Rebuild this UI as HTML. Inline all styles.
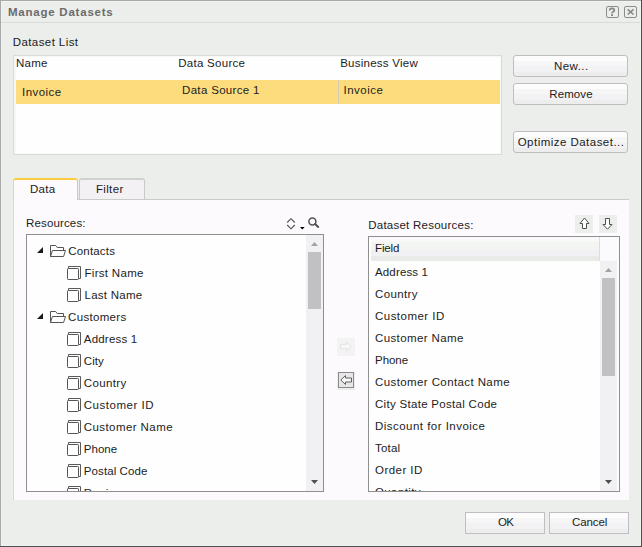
<!DOCTYPE html>
<html><head><meta charset="utf-8">
<style>
html,body{margin:0;padding:0;}
body{width:642px;height:547px;overflow:hidden;background:#eceeeb;font-family:"Liberation Sans",sans-serif;font-size:11.5px;color:#1c1c1c;position:relative;}
.a{position:absolute;}
.t{position:absolute;white-space:nowrap;line-height:14px;}
.btn{position:absolute;box-sizing:border-box;border:1px solid #c0bec2;background:linear-gradient(#fcfcfc 0,#fcfcfc 25%,#f5f6f5 25%,#f5f6f5 50%,#f2f1f3 50%,#f2f1f3 80%,#ededee 80%,#ededee 100%);}
svg{position:absolute;overflow:visible;}
</style></head><body>

<div class="a" style="left:0;top:0;width:642px;height:1px;background:#a8a8a8"></div>
<div class="a" style="left:1px;top:1px;width:640px;height:1px;background:#f2f4f2"></div>
<div class="a" style="left:0;top:0;width:1px;height:547px;background:#a8a8a8"></div>
<div class="a" style="left:1px;top:1px;width:1px;height:545px;background:#f2f4f2"></div>
<div class="a" style="left:640px;top:1px;width:1px;height:545px;background:#f2f4f2"></div>
<div class="a" style="left:1px;top:545px;width:640px;height:1px;background:#f2f4f2"></div>
<div class="a" style="left:641px;top:0;width:1px;height:547px;background:#4e4e4e"></div>
<div class="a" style="left:0;top:546px;width:642px;height:1px;background:#4e4e4e"></div>
<div class="a" style="left:1px;top:22px;width:639px;height:1px;background:#d9dad9"></div>
<div class="a" style="left:606px;top:6px;width:13px;height:12px;box-sizing:border-box;border:1px solid #8d8d8d;border-radius:2px;"></div>
<div class="a" style="left:624px;top:6px;width:13px;height:12px;box-sizing:border-box;border:1px solid #8d8d8d;border-radius:2px;"></div>
<svg style="left:606px;top:6px" width="13" height="12" viewBox="0 0 13 12"><path d="M3.7,4.4 C3.7,1.8 8.3,1.8 8.3,4.2 C8.3,5.7 6,5.6 6,7.3" fill="none" stroke="#878787" stroke-width="1.8"/><rect x="5" y="8.2" width="2" height="1.8" fill="#878787"/></svg>
<svg style="left:624px;top:6px" width="13" height="12" viewBox="0 0 13 12"><path d="M3.7,3.3 L9.5,8.5 M9.5,3.3 L3.7,8.5" fill="none" stroke="#878787" stroke-width="1.6"/></svg>
<div class="a" style="left:13px;top:55px;width:489px;height:100px;box-sizing:border-box;border:1px solid #d9dbd9;background:#fefefe;box-shadow:inset 2px 1px 0 #f6f7f6,inset -1px -1px 0 #f8f9f8"></div>
<div class="a" style="left:16px;top:80px;width:484px;height:24px;background:#fcdc7c"></div>
<div class="a" style="left:338px;top:80px;width:1px;height:24px;background:#d3cdb8"></div>
<div class="btn" style="left:513px;top:55px;width:115px;height:22px;border-radius:3px"></div>
<div class="btn" style="left:513px;top:83px;width:115px;height:22px;border-radius:3px"></div>
<div class="btn" style="left:513px;top:131px;width:115px;height:22px;border-radius:3px"></div>
<div class="btn" style="left:465px;top:512px;width:80px;height:22px;border-radius:0px"></div>
<div class="btn" style="left:549px;top:512px;width:80px;height:22px;border-radius:0px"></div>
<div class="a" style="left:13px;top:199px;width:616px;height:301px;box-sizing:border-box;background:#fcfafd;border-left:1px solid #d8d8d8;border-top:1px solid #c9cbc9;"></div>
<div class="a" style="left:13px;top:178px;width:65px;height:22px;box-sizing:border-box;border:1px solid #c8cac8;border-left-color:#d2d3d2;border-top:2px solid #facc3e;border-bottom:none;border-radius:3px 3px 0 0;background:#fcfafd;"></div>
<div class="a" style="left:79px;top:178px;width:66px;height:21px;box-sizing:border-box;border:1px solid #c8cac8;border-top:2px solid #d0d1d0;border-bottom:none;border-radius:3px 3px 0 0;background:#f3f1f4;"></div>
<div class="a" style="left:26px;top:234px;width:298px;height:258px;box-sizing:border-box;border:1px solid #8f8f8f;background:#fefefe;"></div>
<div class="a" style="left:306px;top:235px;width:17px;height:256px;background:#f1f0f2;"></div>
<div class="a" style="left:308px;top:252px;width:13px;height:57px;background:#c1c0c2;"></div>
<svg style="left:311px;top:242px" width="7" height="4" viewBox="0 0 7 4"><path d="M0,4 L3.5,0 L7,4 Z" fill="#a3a3a3"/></svg>
<svg style="left:311px;top:480px" width="7" height="4" viewBox="0 0 7 4"><path d="M0,0 L3.5,4 L7,0 Z" fill="#505050"/></svg>
<div class="a" style="left:368px;top:236px;width:252px;height:256px;box-sizing:border-box;border:1px solid #8f8f8f;background:#fefefe;"></div>
<div class="a" style="left:599px;top:237px;width:1px;height:24px;background:#dddddd"></div>
<div class="a" style="left:371px;top:237px;width:228px;height:24px;background:linear-gradient(#f9f9f9 0,#f9f9f9 20.8%,#f3f5f3 20.8%,#f3f5f3 54.2%,#f1f0f2 54.2%,#f1f0f2 79.2%,#e9ebe9 79.2%,#e9ebe9 100%);"></div>
<div class="a" style="left:600px;top:237px;width:19px;height:24px;background:#fbfafc;"></div>
<div class="a" style="left:600px;top:261px;width:17px;height:230px;background:#f1f0f2;"></div>
<div class="a" style="left:602px;top:278px;width:13px;height:98px;background:#c1c0c2;"></div>
<svg style="left:605px;top:268px" width="7" height="4" viewBox="0 0 7 4"><path d="M0,4 L3.5,0 L7,4 Z" fill="#a3a3a3"/></svg>
<svg style="left:605px;top:480px" width="7" height="4" viewBox="0 0 7 4"><path d="M0,0 L3.5,4 L7,0 Z" fill="#505050"/></svg>
<svg style="left:286px;top:217px" width="10" height="13" viewBox="0 0 10 13"><path d="M1.2,5.5 L5,1.7 L8.8,5.5 M1.2,8 L5,11.8 L8.8,8" fill="none" stroke="#505050" stroke-width="1.1"/></svg>
<svg style="left:299.8px;top:226.8px" width="4.6" height="2.4" viewBox="0 0 4.6 2.4"><path d="M0,0 L4.6,0 L2.3,2.4 Z" fill="#000"/></svg>
<svg style="left:307px;top:216px" width="13" height="13" viewBox="0 0 13 13"><circle cx="5.4" cy="5.4" r="3.5" fill="none" stroke="#525252" stroke-width="1.5"/><path d="M8.1,8 L11.2,10.9" stroke="#525252" stroke-width="2.1" stroke-linecap="round"/></svg>
<div class="a" style="left:575px;top:215px;width:18px;height:18px;background:#eceeeb"></div>
<div class="a" style="left:599px;top:215px;width:18px;height:18px;background:#eceeeb"></div>
<svg style="left:575px;top:215px" width="18" height="18" viewBox="0 0 18 18"><path d="M9.5,3 L14,8.5 L11.5,8.5 L11.5,13.5 L7.5,13.5 L7.5,8.5 L5,8.5 Z" fill="#fff" stroke="#505050" stroke-width="1"/></svg>
<svg style="left:599px;top:215px" width="18" height="18" viewBox="0 0 18 18"><path d="M8.5,14.2 L13,9.5 L10.5,9.5 L10.5,3.5 L6.5,3.5 L6.5,9.5 L4,9.5 Z" fill="#fff" stroke="#505050" stroke-width="1"/></svg>
<div class="a" style="left:337px;top:338px;width:18px;height:18px;background:#f2f3f2"></div>
<svg style="left:337px;top:338px" width="18" height="18" viewBox="0 0 18 18"><path d="M14.2,8.5 L9.5,4 L9.5,6.3 L3.5,6.3 L3.5,10.7 L9.5,10.7 L9.5,13 Z" fill="#f7f7f7" stroke="#e2e2e2" stroke-width="1"/></svg>
<div class="a" style="left:337px;top:372px;width:18px;height:18px;background:#eceeeb"></div>
<div class="a" style="left:338px;top:372px;width:16px;height:16px;box-sizing:border-box;border:1px solid #8a8a8a;background:#e6e7e6"></div>
<svg style="left:337px;top:372px" width="18" height="18" viewBox="0 0 18 18"><path d="M3.8,8 L8.5,3.5 L8.5,6 L14.5,6 L14.5,10 L8.5,10 L8.5,12.5 Z" fill="#f6f6f6" stroke="#606060" stroke-width="1"/></svg>
<svg style="left:37px;top:247px" width="6" height="6" viewBox="0 0 6 6"><path d="M6,0 L6,6 L0,6 Z" fill="#1a1a1a"/></svg>
<svg style="left:50px;top:245px" width="17" height="13" viewBox="0 0 17 13"><path d="M0.5,11.5 L0.5,0.5 L5.7,0.5 L7.2,2.5 L13.5,2.5 L13.5,5.5 M2.4,5.5 L15.5,5.5 L13.6,11.5 L0.5,11.5 L2.4,5.5" fill="none" stroke="#555" stroke-width="1"/></svg>
<svg style="left:37px;top:313px" width="6" height="6" viewBox="0 0 6 6"><path d="M6,0 L6,6 L0,6 Z" fill="#1a1a1a"/></svg>
<svg style="left:50px;top:311px" width="17" height="13" viewBox="0 0 17 13"><path d="M0.5,11.5 L0.5,0.5 L5.7,0.5 L7.2,2.5 L13.5,2.5 L13.5,5.5 M2.4,5.5 L15.5,5.5 L13.6,11.5 L0.5,11.5 L2.4,5.5" fill="none" stroke="#555" stroke-width="1"/></svg>
<svg style="left:67px;top:266px;" width="14" height="14" viewBox="0 0 14 14"><path d="M1.5,2.5 L1.5,0.5 L13.5,0.5 L13.5,12.5 L11.5,12.5" fill="none" stroke="#5a5a5a" stroke-width="1"/><rect x="0.5" y="2.5" width="11" height="11" rx="0.7" fill="#fff" stroke="#555" stroke-width="1"/></svg>
<svg style="left:67px;top:288px;" width="14" height="14" viewBox="0 0 14 14"><path d="M1.5,2.5 L1.5,0.5 L13.5,0.5 L13.5,12.5 L11.5,12.5" fill="none" stroke="#5a5a5a" stroke-width="1"/><rect x="0.5" y="2.5" width="11" height="11" rx="0.7" fill="#fff" stroke="#555" stroke-width="1"/></svg>
<svg style="left:67px;top:332px;" width="14" height="14" viewBox="0 0 14 14"><path d="M1.5,2.5 L1.5,0.5 L13.5,0.5 L13.5,12.5 L11.5,12.5" fill="none" stroke="#5a5a5a" stroke-width="1"/><rect x="0.5" y="2.5" width="11" height="11" rx="0.7" fill="#fff" stroke="#555" stroke-width="1"/></svg>
<svg style="left:67px;top:354px;" width="14" height="14" viewBox="0 0 14 14"><path d="M1.5,2.5 L1.5,0.5 L13.5,0.5 L13.5,12.5 L11.5,12.5" fill="none" stroke="#5a5a5a" stroke-width="1"/><rect x="0.5" y="2.5" width="11" height="11" rx="0.7" fill="#fff" stroke="#555" stroke-width="1"/></svg>
<svg style="left:67px;top:376px;" width="14" height="14" viewBox="0 0 14 14"><path d="M1.5,2.5 L1.5,0.5 L13.5,0.5 L13.5,12.5 L11.5,12.5" fill="none" stroke="#5a5a5a" stroke-width="1"/><rect x="0.5" y="2.5" width="11" height="11" rx="0.7" fill="#fff" stroke="#555" stroke-width="1"/></svg>
<svg style="left:67px;top:398px;" width="14" height="14" viewBox="0 0 14 14"><path d="M1.5,2.5 L1.5,0.5 L13.5,0.5 L13.5,12.5 L11.5,12.5" fill="none" stroke="#5a5a5a" stroke-width="1"/><rect x="0.5" y="2.5" width="11" height="11" rx="0.7" fill="#fff" stroke="#555" stroke-width="1"/></svg>
<svg style="left:67px;top:420px;" width="14" height="14" viewBox="0 0 14 14"><path d="M1.5,2.5 L1.5,0.5 L13.5,0.5 L13.5,12.5 L11.5,12.5" fill="none" stroke="#5a5a5a" stroke-width="1"/><rect x="0.5" y="2.5" width="11" height="11" rx="0.7" fill="#fff" stroke="#555" stroke-width="1"/></svg>
<svg style="left:67px;top:442px;" width="14" height="14" viewBox="0 0 14 14"><path d="M1.5,2.5 L1.5,0.5 L13.5,0.5 L13.5,12.5 L11.5,12.5" fill="none" stroke="#5a5a5a" stroke-width="1"/><rect x="0.5" y="2.5" width="11" height="11" rx="0.7" fill="#fff" stroke="#555" stroke-width="1"/></svg>
<svg style="left:67px;top:464px;" width="14" height="14" viewBox="0 0 14 14"><path d="M1.5,2.5 L1.5,0.5 L13.5,0.5 L13.5,12.5 L11.5,12.5" fill="none" stroke="#5a5a5a" stroke-width="1"/><rect x="0.5" y="2.5" width="11" height="11" rx="0.7" fill="#fff" stroke="#555" stroke-width="1"/></svg>
<svg style="left:67px;top:486px;overflow:hidden;" width="14" height="5" viewBox="0 0 14 5"><path d="M1.5,2.5 L1.5,0.5 L13.5,0.5 L13.5,12.5 L11.5,12.5" fill="none" stroke="#5a5a5a" stroke-width="1"/><rect x="0.5" y="2.5" width="11" height="11" rx="0.7" fill="#fff" stroke="#555" stroke-width="1"/></svg>
<div class="t" style="left:7.9px;top:5px;letter-spacing:0.78px;font-weight:bold;color:#6b6b6b;">Manage Datasets</div>
<div class="t" style="left:12.7px;top:35px;letter-spacing:0.42px;">Dataset List</div>
<div class="t" style="left:16.0px;top:56px;letter-spacing:0.27px;">Name</div>
<div class="t" style="left:178.2px;top:56px;letter-spacing:0.29px;">Data Source</div>
<div class="t" style="left:340.2px;top:56px;letter-spacing:0.25px;">Business View</div>
<div class="t" style="left:22.0px;top:85px;letter-spacing:0.46px;">Invoice</div>
<div class="t" style="left:182.0px;top:83px;letter-spacing:0.33px;">Data Source 1</div>
<div class="t" style="left:343.5px;top:83px;letter-spacing:0.48px;">Invoice</div>
<div class="t" style="left:554.0px;top:59px;letter-spacing:0.43px;">New...</div>
<div class="t" style="left:549.3px;top:87px;letter-spacing:0.09px;">Remove</div>
<div class="t" style="left:517.7px;top:135px;letter-spacing:0.47px;">Optimize Dataset...</div>
<div class="t" style="left:29.9px;top:182px;letter-spacing:0.30px;">Data</div>
<div class="t" style="left:96.0px;top:182px;letter-spacing:0.33px;">Filter</div>
<div class="t" style="left:26.0px;top:216px;letter-spacing:0.15px;">Resources:</div>
<div class="t" style="left:368.2px;top:218px;letter-spacing:0.25px;">Dataset Resources:</div>
<div class="t" style="left:497.9px;top:515px;letter-spacing:-0.60px;">OK</div>
<div class="t" style="left:571.9px;top:515px;letter-spacing:-0.06px;">Cancel</div>
<div class="t" style="left:68.2px;top:244px;letter-spacing:0.20px;">Contacts</div>
<div class="t" style="left:84.5px;top:266px;letter-spacing:0.30px;">First Name</div>
<div class="t" style="left:84.5px;top:288px;letter-spacing:0.25px;">Last Name</div>
<div class="t" style="left:68.1px;top:310px;letter-spacing:0.31px;">Customers</div>
<div class="t" style="left:83.8px;top:332px;letter-spacing:0.20px;">Address 1</div>
<div class="t" style="left:83.8px;top:354px;letter-spacing:0.06px;">City</div>
<div class="t" style="left:83.8px;top:376px;letter-spacing:0.35px;">Country</div>
<div class="t" style="left:83.8px;top:398px;letter-spacing:0.51px;">Customer ID</div>
<div class="t" style="left:83.8px;top:420px;letter-spacing:0.42px;">Customer Name</div>
<div class="t" style="left:83.8px;top:442px;letter-spacing:0.03px;">Phone</div>
<div class="t" style="left:83.8px;top:464px;letter-spacing:0.09px;">Postal Code</div>
<div class="t" style="left:83.8px;top:486px;letter-spacing:0.25px;height:5px;overflow:hidden;">Region</div>
<div class="t" style="left:375.0px;top:241px;letter-spacing:-0.13px;">Field</div>
<div class="t" style="left:375.0px;top:265px;letter-spacing:0.15px;">Address 1</div>
<div class="t" style="left:375.0px;top:287px;letter-spacing:0.37px;">Country</div>
<div class="t" style="left:375.0px;top:309px;letter-spacing:0.47px;">Customer ID</div>
<div class="t" style="left:375.0px;top:331px;letter-spacing:0.39px;">Customer Name</div>
<div class="t" style="left:375.0px;top:353px;letter-spacing:-0.04px;">Phone</div>
<div class="t" style="left:375.0px;top:375px;letter-spacing:0.40px;">Customer Contact Name</div>
<div class="t" style="left:375.0px;top:397px;letter-spacing:0.30px;">City State Postal Code</div>
<div class="t" style="left:375.0px;top:419px;letter-spacing:0.47px;">Discount for Invoice</div>
<div class="t" style="left:375.0px;top:441px;letter-spacing:0.20px;">Total</div>
<div class="t" style="left:375.0px;top:463px;letter-spacing:0.46px;">Order ID</div>
<div class="t" style="left:375.0px;top:485px;letter-spacing:0.38px;height:6px;overflow:hidden;">Quantity</div>
</body></html>
